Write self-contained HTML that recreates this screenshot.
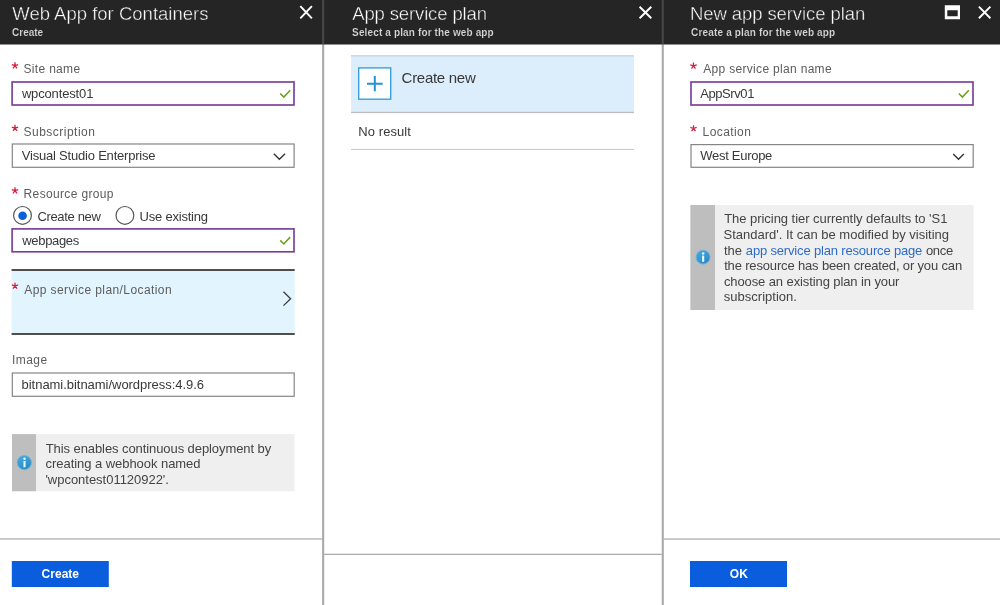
<!DOCTYPE html>
<html>
<head>
<meta charset="utf-8">
<title>Web App for Containers</title>
<style>
html,body{margin:0;padding:0;background:#fff;}
body{width:1000px;height:605px;position:relative;overflow:hidden;font-family:"Liberation Sans",sans-serif;}
#shapes{position:absolute;left:0;top:0;width:1000px;height:605px;}
.t{position:absolute;white-space:pre;line-height:20px;height:20px;font-family:"Liberation Sans",sans-serif;}
</style>
</head>
<body>
<svg id="shapes" width="1000" height="605" viewBox="0 0 1000 605">
  <!-- header bar -->
  <rect x="0" y="0" width="1000" height="44.5" fill="#252525"/>
  <!-- panel separators -->
  <rect x="322.1" y="44.5" width="2.1" height="561" fill="#a9a9a9"/>
  <rect x="661.7" y="44.5" width="2.1" height="561" fill="#a9a9a9"/>
  <rect x="322.1" y="0" width="2.1" height="44.5" fill="#484848"/>
  <rect x="661.7" y="0" width="2.1" height="44.5" fill="#484848"/>

  <!-- header icons -->
  <g stroke="#ffffff" stroke-width="1.95" fill="none" stroke-linecap="butt">
    <path d="M300.3 6.2 L311.9 18.3 M311.9 6.2 L300.3 18.3"/>
    <path d="M639.6 6.7 L651.3 18.3 M651.3 6.7 L639.6 18.3"/>
    <path d="M978.9 6.6 L990.4 18.3 M990.4 6.6 L978.9 18.3"/>
  </g>
  <path fill="#ffffff" fill-rule="evenodd" d="M944.8 5.2 H960 V19.2 H944.8 Z M947.3 10.3 H957.7 V16.2 H947.3 Z"/>

  <!-- LEFT PANEL -->
  <g fill="#fff" stroke-width="1.65">
    <rect x="12.1" y="82" width="281.9" height="23" stroke="#7b3d99"/>
    <rect x="12.3" y="144.0" width="281.8" height="23.3" stroke="#858585" stroke-width="1.2"/>
    <rect x="12.1" y="228.9" width="281.9" height="22.9" stroke="#7b3d99"/>
    <rect x="12.3" y="373.0" width="281.9" height="23.3" stroke="#858585" stroke-width="1.2"/>
  </g>
  <g fill="#fff" stroke-width="1.65">
    <rect x="691" y="82" width="282" height="23" stroke="#7b3d99"/>
    <rect x="691" y="144.6" width="282.2" height="22.7" stroke="#858585" stroke-width="1.2"/>
  </g>
  <!-- checks -->
  <g stroke="#6f9f1c" stroke-width="1.55" fill="none">
    <path d="M280.2 93.5 L283.8 97.1 L290.2 90.2"/>
    <path d="M280.2 240.4 L283.8 244.0 L290.2 237.1"/>
    <path d="M958.8 93.5 L962.4 97.1 L968.8 90.2"/>
  </g>
  <!-- select chevrons -->
  <g stroke="#333" stroke-width="1.4" fill="none">
    <path d="M273.8 153.8 L279.4 159.3 L285 153.8"/>
    <path d="M953.2 153.9 L958.5 159.3 L963.8 153.9"/>
  </g>
  <!-- radios -->
  <circle cx="22.5" cy="215.4" r="8.9" fill="#fff" stroke="#555" stroke-width="1.2"/>
  <circle cx="22.6" cy="215.7" r="4.3" fill="#0b5fd8"/>
  <circle cx="124.9" cy="215.4" r="8.9" fill="#fff" stroke="#555" stroke-width="1.2"/>
  <!-- selected row -->
  <rect x="11.6" y="270" width="283.1" height="64" fill="#e2f5fe"/>
  <rect x="11.6" y="269.1" width="283.1" height="1.8" fill="#3c3c3c"/>
  <rect x="11.6" y="333.1" width="283.1" height="1.8" fill="#3c3c3c"/>
  <path d="M283.5 291.8 L290.6 298.7 L283.5 305.6" stroke="#3a3a3a" stroke-width="1.3" fill="none"/>
  <!-- info box -->
  <rect x="12" y="434.1" width="282.5" height="57.1" fill="#efefef"/>
  <rect x="12" y="434.1" width="24" height="57.1" fill="#bebebe"/>
  <circle cx="24.3" cy="462.6" r="7.1" fill="url(#ig)" stroke="#62b6e0" stroke-width="0.9"/>
  <rect x="23.45" y="461" width="2.1" height="6.2" fill="#e6f8ff"/>
  <circle cx="24.5" cy="458.8" r="1.25" fill="#e6f8ff"/>
  <!-- footer -->
  <rect x="0" y="538.4" width="322.1" height="1.15" fill="#a4a4a4"/>
  <rect x="11.8" y="561" width="97" height="26" fill="#0a5ddc"/>

  <!-- MIDDLE PANEL -->
  <rect x="351" y="55.6" width="283" height="56.4" fill="#dceefc"/>
  <rect x="351" y="55.3" width="283" height="1.1" fill="#bccddd"/>
  <rect x="351" y="111.8" width="283" height="1.3" fill="#bdbdbd"/>
  <rect x="358.7" y="67.9" width="32" height="31.3" fill="#fff" stroke="#3a9fdc" stroke-width="1.4"/>
  <path d="M367 83.8 H382.7 M374.8 76.1 V91.2" stroke="#2591d6" stroke-width="2" fill="none"/>
  <rect x="351" y="148.9" width="283" height="1" fill="#c6c6c6"/>
  <rect x="324.2" y="553.75" width="337.5" height="1.15" fill="#a4a4a4"/>

  <!-- RIGHT PANEL -->
  <rect x="690.4" y="205" width="283.2" height="105" fill="#efefef"/>
  <rect x="690.4" y="205" width="24.6" height="105" fill="#bebebe"/>
  <circle cx="703.05" cy="257.15" r="6.95" fill="url(#ig)" stroke="#62b6e0" stroke-width="0.9"/>
  <rect x="702.1" y="255.6" width="2.1" height="6.2" fill="#e6f8ff"/>
  <circle cx="703.15" cy="253.4" r="1.25" fill="#e6f8ff"/>
  <rect x="663.8" y="538.5" width="336.2" height="1.15" fill="#a4a4a4"/>
  <rect x="690" y="561" width="97" height="26" fill="#0a5ddc"/>
  <!-- required stars -->
  <g stroke="#d81f3f" stroke-width="1.3" fill="none" stroke-linecap="butt">
    <path d="M15.00 65.70 L15.00 62.35 M15.00 65.70 L18.19 64.66 M15.00 65.70 L16.97 68.41 M15.00 65.70 L13.03 68.41 M15.00 65.70 L11.81 64.66"/>
    <path d="M15.00 128.20 L15.00 124.85 M15.00 128.20 L18.19 127.16 M15.00 128.20 L16.97 130.91 M15.00 128.20 L13.03 130.91 M15.00 128.20 L11.81 127.16"/>
    <path d="M15.00 190.60 L15.00 187.25 M15.00 190.60 L18.19 189.56 M15.00 190.60 L16.97 193.31 M15.00 190.60 L13.03 193.31 M15.00 190.60 L11.81 189.56"/>
    <path d="M15.00 286.00 L15.00 282.65 M15.00 286.00 L18.19 284.96 M15.00 286.00 L16.97 288.71 M15.00 286.00 L13.03 288.71 M15.00 286.00 L11.81 284.96"/>
    <path d="M693.50 65.80 L693.50 62.45 M693.50 65.80 L696.69 64.76 M693.50 65.80 L695.47 68.51 M693.50 65.80 L691.53 68.51 M693.50 65.80 L690.31 64.76"/>
    <path d="M693.50 128.50 L693.50 125.15 M693.50 128.50 L696.69 127.46 M693.50 128.50 L695.47 131.21 M693.50 128.50 L691.53 131.21 M693.50 128.50 L690.31 127.46"/>
  </g>
  <defs>
    <linearGradient id="ig" x1="0.2" y1="0" x2="0.8" y2="1">
      <stop offset="0" stop-color="#49a9dc"/>
      <stop offset="1" stop-color="#2987c0"/>
    </linearGradient>
  </defs>
</svg>
<div id="txt" style="position:absolute;left:0;top:0;width:1000px;height:605px;will-change:transform;">
<span class="t" style="-webkit-text-stroke:0.4px #252525;left:12.25px;top:4px;font-size:18.5px;color:#ffffff;font-weight:400;letter-spacing:0.006px">Web App for Containers</span>
<span class="t" style="-webkit-text-stroke:0.12px #252525;left:12.07px;top:23px;font-size:10px;color:#d6d6d6;font-weight:700;letter-spacing:-0.003px">Create</span>
<span class="t" style="left:23.54px;top:59px;font-size:12px;color:#5c5c5c;font-weight:400;letter-spacing:0.318px">Site name</span>
<span class="t" style="left:21.89px;top:84px;font-size:13px;color:#383838;font-weight:400;letter-spacing:-0.151px">wpcontest01</span>
<span class="t" style="left:23.54px;top:122px;font-size:12px;color:#5c5c5c;font-weight:400;letter-spacing:0.483px">Subscription</span>
<span class="t" style="left:21.79px;top:146px;font-size:13px;color:#383838;font-weight:400;letter-spacing:-0.206px">Visual Studio Enterprise</span>
<span class="t" style="left:23.61px;top:184px;font-size:12px;color:#5c5c5c;font-weight:400;letter-spacing:0.343px">Resource group</span>
<span class="t" style="left:37.40px;top:207px;font-size:13px;color:#383838;font-weight:400;letter-spacing:-0.342px">Create new</span>
<span class="t" style="left:139.58px;top:207px;font-size:13px;color:#383838;font-weight:400;letter-spacing:-0.218px">Use existing</span>
<span class="t" style="left:22.34px;top:231px;font-size:13px;color:#383838;font-weight:400;letter-spacing:-0.344px">webpages</span>
<span class="t" style="left:24.26px;top:280px;font-size:12px;color:#5c5c5c;font-weight:400;letter-spacing:0.414px">App service plan/Location</span>
<span class="t" style="left:11.91px;top:350px;font-size:12px;color:#5c5c5c;font-weight:400;letter-spacing:0.469px">Image</span>
<span class="t" style="left:21.57px;top:375px;font-size:13px;color:#383838;font-weight:400;letter-spacing:-0.036px">bitnami.bitnami/wordpress:4.9.6</span>
<span class="t" style="left:45.74px;top:439px;font-size:13px;color:#444444;font-weight:400;letter-spacing:-0.082px">This enables continuous deployment by</span>
<span class="t" style="left:45.62px;top:454px;font-size:13px;color:#444444;font-weight:400;letter-spacing:-0.053px">creating a webhook named</span>
<span class="t" style="left:45.42px;top:470px;font-size:13px;color:#444444;font-weight:400;letter-spacing:-0.024px">'wpcontest01120922'.</span>
<span class="t" style="left:41.55px;top:564px;font-size:12px;color:#ffffff;font-weight:700;letter-spacing:0.029px">Create</span>
<span class="t" style="-webkit-text-stroke:0.4px #252525;left:352.21px;top:4px;font-size:18.5px;color:#ffffff;font-weight:400;letter-spacing:-0.134px">App service plan</span>
<span class="t" style="-webkit-text-stroke:0.12px #252525;left:352.11px;top:23px;font-size:10px;color:#d6d6d6;font-weight:700;letter-spacing:0.136px">Select a plan for the web app</span>
<span class="t" style="left:401.59px;top:68px;font-size:15px;color:#383838;font-weight:400;letter-spacing:-0.282px">Create new</span>
<span class="t" style="left:358.37px;top:122px;font-size:13px;color:#383838;font-weight:400;letter-spacing:0.064px">No result</span>
<span class="t" style="-webkit-text-stroke:0.4px #252525;left:689.93px;top:4px;font-size:18.5px;color:#ffffff;font-weight:400;letter-spacing:-0.083px">New app service plan</span>
<span class="t" style="-webkit-text-stroke:0.12px #252525;left:691.07px;top:23px;font-size:10px;color:#d6d6d6;font-weight:700;letter-spacing:0.167px">Create a plan for the web app</span>
<span class="t" style="left:703.26px;top:59px;font-size:12px;color:#5c5c5c;font-weight:400;letter-spacing:0.314px">App service plan name</span>
<span class="t" style="left:700.21px;top:84px;font-size:13px;color:#383838;font-weight:400;letter-spacing:-0.418px">AppSrv01</span>
<span class="t" style="left:702.61px;top:122px;font-size:12px;color:#5c5c5c;font-weight:400;letter-spacing:0.415px">Location</span>
<span class="t" style="left:700.29px;top:146px;font-size:13px;color:#383838;font-weight:400;letter-spacing:-0.289px">West Europe</span>
<span class="t" style="left:724.21px;top:209px;font-size:13px;color:#444444;font-weight:400;letter-spacing:-0.045px">The pricing tier currently defaults to 'S1</span>
<span class="t" style="left:723.61px;top:225px;font-size:13px;color:#444444;font-weight:400;letter-spacing:-0.010px">Standard'. It can be modified by visiting</span>
<span class="t" style="left:724.00px;top:241px;font-size:13px;color:#444444;font-weight:400;letter-spacing:0.000px">the </span>
<span class="t" style="left:745.84px;top:241px;font-size:13px;color:#2e6bc6;font-weight:400;letter-spacing:-0.169px">app service plan resource page</span>
<span class="t" style="left:925.92px;top:241px;font-size:13px;color:#444444;font-weight:400;letter-spacing:-0.269px">once</span>
<span class="t" style="left:724.13px;top:256px;font-size:13px;color:#444444;font-weight:400;letter-spacing:-0.157px">the resource has been created, or you can</span>
<span class="t" style="left:723.92px;top:272px;font-size:13px;color:#444444;font-weight:400;letter-spacing:-0.101px">choose an existing plan in your</span>
<span class="t" style="left:723.81px;top:287px;font-size:13px;color:#444444;font-weight:400;letter-spacing:0.013px">subscription.</span>
<span class="t" style="left:729.86px;top:564px;font-size:12px;color:#ffffff;font-weight:700;letter-spacing:-0.061px">OK</span>
</div>
</body>
</html>
